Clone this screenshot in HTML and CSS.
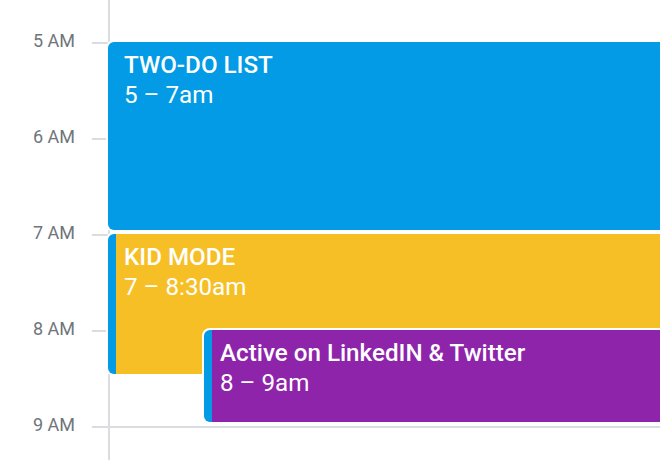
FILE: index.html
```html
<!DOCTYPE html>
<html lang="en">
<head>
  <meta charset="UTF-8">
  <meta name="viewport" content="width=device-width, initial-scale=1.0">
  <title>Day view</title>
  <link rel="stylesheet" href="styles.css">
</head>
<body>
  <div class="calendar">
    <div class="vline"></div>

    <div class="line h5"></div>
    <div class="line h6"></div>
    <div class="line h7"></div>
    <div class="line h8"></div>
    <div class="line h9"></div>

    <div class="label h5">5 AM</div>
    <div class="label h6">6 AM</div>
    <div class="label h7">7 AM</div>
    <div class="label h8">8 AM</div>
    <div class="label h9">9 AM</div>

    <div class="event blue" style="grid-row: 2 / 6">
      <div class="title">TWO-DO LIST</div>
      <div class="time">5 – 7am</div>
    </div>
    <div class="event yellow" style="grid-row: 6 / 9">
      <div class="title">KID MODE</div>
      <div class="time">7 – 8:30am</div>
    </div>
    <div class="event purple" style="grid-row: 8 / 10">
      <div class="title">Active on LinkedIN &amp; Twitter</div>
      <div class="time">8 – 9am</div>
    </div>
  </div>
</body>
</html>
```

FILE: styles.css
```css
body {
  margin: 0;
  height: 100vh;
  overflow: hidden;
  background: #fff;
  font-family: Roboto, "Liberation Sans", sans-serif;
}

.calendar {
  display: grid;
  grid-template-columns: 108px 1fr;
  grid-template-rows: 42px repeat(9, 48px);
}

.vline {
  grid-column: 2;
  grid-row: 1 / -1;
  border-left: 2px solid #dadce0;
}

.line {
  grid-column: 1 / 3;
  align-self: start;
  margin-left: 92px;
  border-top: 2px solid #dadce0;
}

.label {
  grid-column: 1;
  align-self: start;
  justify-self: end;
  margin: -13px 33px 0 0;
  font-size: 18px;
  line-height: 24px;
  color: #70757a;
}

.h5 { grid-row: 2; }
.h6 { grid-row: 4; }
.h7 { grid-row: 6; }
.h8 { grid-row: 8; }
.h9 { grid-row: 10; }

.event {
  grid-column: 2;
  margin: 0 -12px 4px 0;
  padding: 8px 8px;
  border-left: 8px solid #039be5;
  border-radius: 6px;
  box-shadow: 0 0 0 2px #fff;
  color: #fff;
  font-size: 24.2px;
  line-height: 30px;
  overflow: hidden;
}

.event .title {
  font-weight: 500;
}

.blue { background: #039be5; }
.yellow { background: #f6bf26; }
.purple {
  background: #8e24aa;
  margin-left: 96px;
}
```
